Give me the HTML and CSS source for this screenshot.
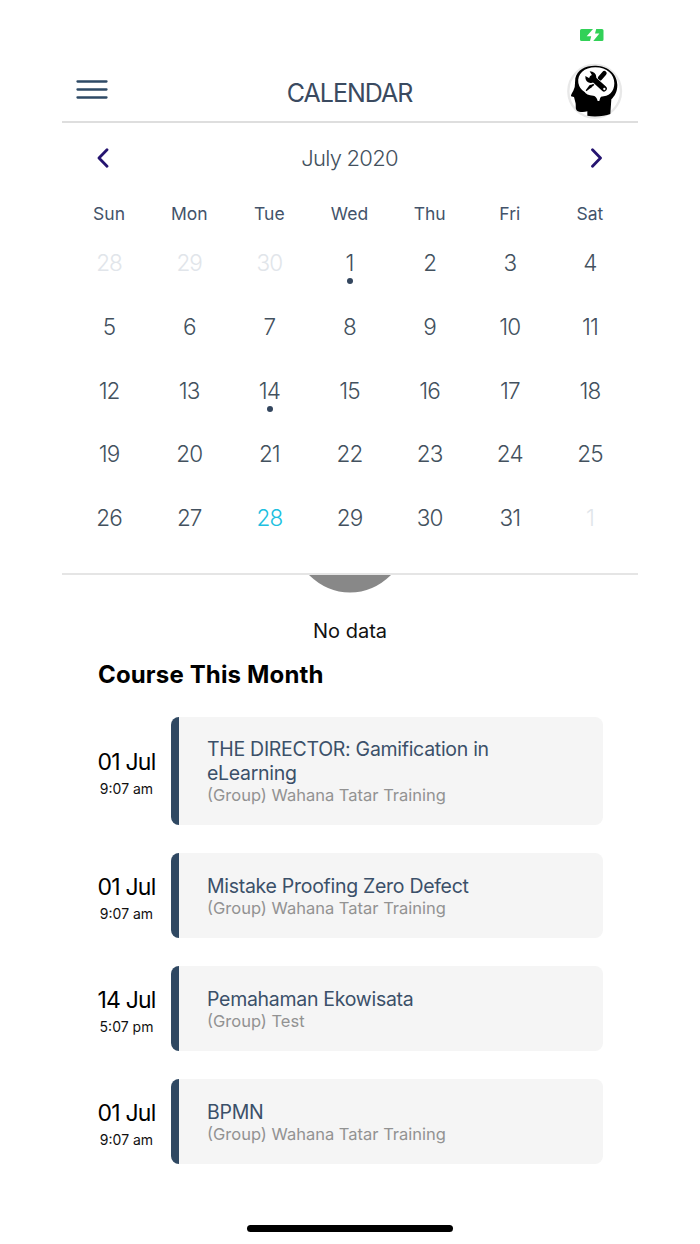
FILE: index.html
```html
<!DOCTYPE html>
<html lang="en">
<head>
<meta charset="utf-8">
<title>Calendar</title>
<link rel="stylesheet" href="styles.css">
</head>
<body>
<main class="screen">
  <div class="status">
    <svg class="battery" viewBox="0 0 24 12" width="24" height="12"><path d="M1.500 0H13L6.700 7.200H11.200L10 12H1.500Q0 12 0 10.500V1.500Q0 0 1.500 0ZM16.200 0H22Q23.500 0 23.500 1.500V10.500Q23.500 12 22 12H13.300L19.400 4.600H15Z" fill="#32d158"/></svg>
  </div>
  <header class="header">
    <svg class="menu" viewBox="0 0 32 20" width="32" height="20" fill="none" stroke="#2e4a66" stroke-width="2.300" stroke-linecap="round"><path d="M1.500 1.500H30.500M1.500 9.500H30.500M1.500 17.500H30.500"/></svg>
    <h1 class="title">CALENDAR</h1>
    <svg class="avatar" viewBox="54 144 168 168" width="56" height="56">
      <circle cx="137" cy="229" r="79" fill="#fff" stroke="#e8e8e8" stroke-width="7"/>
      <path d="M79 190C84 164 110 151 141 152C179 153 205 179 205 210C205 232 196 244 187 253L184 297C168 303 137 307 115 302V289C104 292 89 291 84 287C78 282 82 270 79 262L75 246L66 244Q65 240 73 227Q79 215 78 204Z" fill="#000"/>
      <path d="M88 204C84 177 106 157 139 157C174 157 196 178 196 205C196 231 179 245 156 245Q153 248 151 258H146Q143 244 133 242Q111 240 107 231Q92 223 88 204Z" fill="#fff"/>
      <path d="M153 190L166 175" stroke="#000" stroke-width="14" stroke-linecap="round"/>
      <path d="M150 193L129 213" stroke="#000" stroke-width="5"/>
      <path d="M134 208L128 217L112 229L110 226L122 210Z" fill="#000"/>
      <path d="M130 190L165 221" stroke="#fff" stroke-width="21" stroke-linecap="round"/>
      <path d="M130 189L165 221" stroke="#000" stroke-width="17" stroke-linecap="round"/>
      <path d="M122 169Q141 170 142 187Q139 206 124 204Q108 201 109 183L121 190L130 182Z" fill="#000"/>
      <circle cx="166" cy="222" r="3.500" fill="#fff"/>
    </svg>
  </header>
  <section class="calendar">
    <div class="month">
      <svg viewBox="0 0 14 20" width="14" height="20" class="arrow"><path d="M12 1.800L4 10L12 18.200"/></svg>
      <span class="month-name">July 2020</span>
      <svg viewBox="0 0 14 20" width="14" height="20" class="arrow"><path d="M2.500 1.800L10.500 10L2.500 18.200"/></svg>
    </div>
    <div class="week"><span>Sun</span><span>Mon</span><span>Tue</span><span>Wed</span><span>Thu</span><span>Fri</span><span>Sat</span></div>
    <div class="days">
      <span class="off">28</span><span class="off">29</span><span class="off">30</span><span class="event">1</span><span>2</span><span>3</span><span>4</span>
      <span>5</span><span>6</span><span>7</span><span>8</span><span>9</span><span>10</span><span>11</span>
      <span>12</span><span>13</span><span class="event">14</span><span>15</span><span>16</span><span>17</span><span>18</span>
      <span>19</span><span>20</span><span>21</span><span>22</span><span>23</span><span>24</span><span>25</span>
      <span>26</span><span>27</span><span class="today">28</span><span>29</span><span>30</span><span>31</span><span class="off">1</span>
    </div>
  </section>
  <section class="empty">
    <svg viewBox="0 0 84 19" width="84" height="19"><path d="M1 0H83Q65 17.500 42 17.500Q19 17.500 1 0Z" fill="#888"/></svg>
    <p class="empty-text">No data</p>
  </section>
  <section class="courses">
    <h2 class="heading">Course This Month</h2>
    <article class="course tall">
      <div class="when"><span class="date">01 Jul</span><span class="time">9:07 am</span></div>
      <div class="card"><span class="name">THE DIRECTOR: Gamification in<br>eLearning</span><span class="group">(Group) Wahana Tatar Training</span></div>
    </article>
    <article class="course">
      <div class="when"><span class="date">01 Jul</span><span class="time">9:07 am</span></div>
      <div class="card"><span class="name">Mistake Proofing Zero Defect</span><span class="group">(Group) Wahana Tatar Training</span></div>
    </article>
    <article class="course">
      <div class="when"><span class="date">14 Jul</span><span class="time">5:07 pm</span></div>
      <div class="card"><span class="name">Pemahaman Ekowisata</span><span class="group">(Group) Test</span></div>
    </article>
    <article class="course">
      <div class="when"><span class="date">01 Jul</span><span class="time">9:07 am</span></div>
      <div class="card"><span class="name">BPMN</span><span class="group">(Group) Wahana Tatar Training</span></div>
    </article>
  </section>
  <div class="home"></div>
</main>
</body>
</html>
```
FILE: styles.css
```css
* { box-sizing: border-box; }
body { margin: 0; background: #fff; font-family: Inter, "Liberation Sans", sans-serif; }
.screen { width: 700px; height: 1244px; padding: 0 62px; overflow: hidden; }
.status { height: 62px; padding: 29px 34px 0 0; display: flex; justify-content: flex-end; }
.battery { display: block; }
.header { height: 61px; border-bottom: 2px solid #dedede; display: grid; grid-template-columns: 56px 1fr 56px; align-items: start; padding: 0 15px 0 14px; }
.menu { margin-top: 18px; }
.title { margin: 15px 0 0; text-align: center; font-weight: 400; font-size: 25px; line-height: 32px; letter-spacing: -1px; color: #3a4a60; }
.avatar { margin-top: 1px; }
.calendar { height: 452px; border-bottom: 2px solid #e5e5e5; padding: 0 8px 0 7px; }
.month { height: 71px; padding: 0 26px 2px; display: flex; justify-content: space-between; align-items: center; }
.arrow { fill: none; stroke: #251470; stroke-width: 2.8; stroke-linecap: round; stroke-linejoin: round; }
.month-name { font-size: 22px; font-weight: 300; letter-spacing: -0.75px; color: #43515e; }
.week, .days { display: grid; grid-template-columns: repeat(7, 1fr); text-align: center; }
.week { height: 38px; line-height: 39px; font-size: 17.5px; color: #43536a; }
.days { grid-auto-rows: 63.8px; font-size: 22.5px; font-weight: 300; line-height: 62px; letter-spacing: -0.9px; color: #43515e; }
.off { color: #e1e5ea; }
.today { color: #20bfe0; }
.event { position: relative; }
.event::after { content: ""; position: absolute; left: 50%; top: 46px; width: 6px; height: 6px; margin-left: -2.5px; border-radius: 50%; background: #33465e; }
.empty { height: 82px; display: flex; flex-direction: column; align-items: center; }
.empty-text { margin: 24px 0 0; font-size: 20px; line-height: 26px; color: #111; }
.courses { padding: 0 35px; }
.heading { margin: 0 0 23px; padding-left: 1px; font-size: 24px; line-height: 36px; height: 37px; font-weight: 700; letter-spacing: 0.15px; color: #000; }
.course { height: 85px; margin-bottom: 28px; display: flex; }
.tall { height: 108px; }
.when { width: 59px; margin-right: 15px; padding-top: 6px; display: flex; flex-direction: column; justify-content: center; align-items: center; white-space: nowrap; }
.date { font-size: 23px; line-height: 30px; letter-spacing: -0.8px; color: #000; }
.time { font-size: 14px; line-height: 24px; color: #111; }
.card { flex: 1; border-left: 8px solid #2f4862; border-radius: 8px; background: #f5f5f5; padding-left: 28px; display: flex; flex-direction: column; justify-content: center; }
.name { font-size: 19.5px; line-height: 24px; letter-spacing: -0.29px; color: #3b5069; }
.group { font-size: 16.5px; line-height: 20px; color: #929292; }
.home { width: 206px; height: 7px; margin: 61px auto 0; border-radius: 4px; background: #000; }
```
